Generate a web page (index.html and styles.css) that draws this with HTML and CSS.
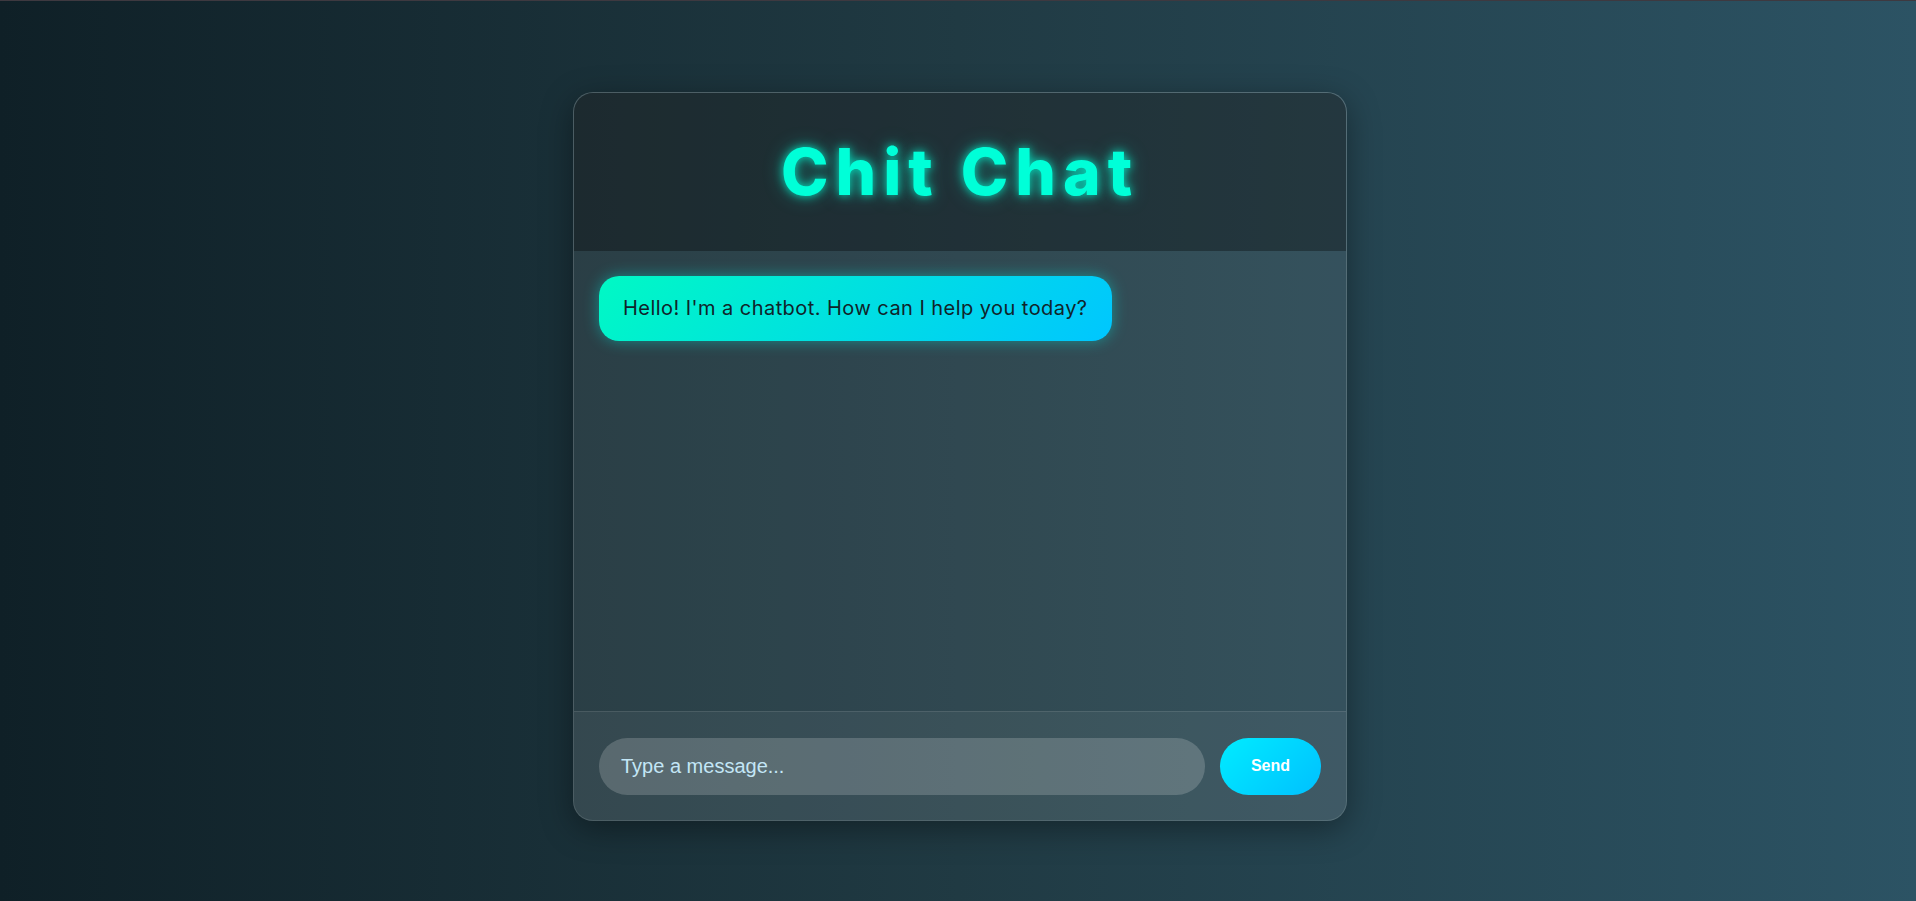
FILE: index.html
```html
<!DOCTYPE html>
<html lang="en">
<head>
<meta charset="utf-8">
<title>Chit Chat</title>
<link rel="stylesheet" href="styles.css">
</head>
<body>
  <div class="chat-card">
    <header class="chat-header">
      <h1 class="chat-title">Chit Chat</h1>
    </header>
    <main class="chat-messages">
      <div class="bubble bot">Hello! I'm a chatbot. How can I help you today?</div>
    </main>
    <footer class="chat-input">
      <input class="message-field" type="text" placeholder="Type a message...">
      <button class="send-btn" type="button">Send</button>
    </footer>
  </div>
</body>
</html>
```

FILE: styles.css
```css
* { box-sizing: border-box; }

html, body { height: 100%; }

body {
  margin: 0;
  border-top: 1px solid #3e3940;
  background: linear-gradient(to right, #0f2027, #203a43, #2c5364);
  display: flex;
  flex-direction: column;
  align-items: center;
  padding: 91px 0 0 4px;
  font-family: Inter, "Liberation Sans", sans-serif;
  overflow: hidden;
}

.chat-card {
  width: 774px;
  height: 729px;
  display: flex;
  flex-direction: column;
  border: 1px solid rgba(255, 255, 255, 0.16);
  border-radius: 20px;
  background: rgba(255, 255, 255, 0.075);
  box-shadow: 0 8px 32px rgba(0, 0, 0, 0.37);
  overflow: hidden;
}

.chat-header {
  height: 158px;
  flex: none;
  display: flex;
  align-items: center;
  justify-content: center;
  background: rgba(0, 0, 0, 0.32);
}

.chat-title {
  margin: 0;
  font-family: Inter, "Liberation Sans", sans-serif;
  font-weight: 800;
  font-size: 64px;
  letter-spacing: 7px;
  line-height: 1;
  color: #00ffd8;
  text-shadow: 0 0 10px rgba(0, 255, 216, 0.8), 0 0 20px rgba(0, 255, 216, 0.35);
}

.chat-messages {
  flex: 1;
  padding: 25px;
  display: flex;
  flex-direction: column;
  align-items: flex-start;
}

.bubble {
  padding: 18px 24px;
  border-radius: 20px;
  font-size: 20px;
  line-height: 29px;
  letter-spacing: 0.45px;
  color: #10242a;
}

.bubble.bot {
  background: linear-gradient(135deg, #00f9c4, #00c6ff);
  box-shadow: 0 0 15px rgba(0, 230, 220, 0.45);
}

.chat-input {
  flex: none;
  height: 109px;
  display: flex;
  align-items: center;
  gap: 15px;
  padding: 25px;
  border-top: 1px solid rgba(255, 255, 255, 0.1);
  background: rgba(255, 255, 255, 0.05);
}

.message-field {
  flex: 1;
  height: 57px;
  border: none;
  outline: none;
  border-radius: 29px;
  padding: 0 22px;
  background: rgba(255, 255, 255, 0.18);
  font-family: "Liberation Sans", Arial, sans-serif;
  font-size: 20px;
  color: #d8f2ff;
}

.message-field::placeholder {
  color: #c3e6f6;
  opacity: 1;
}

.send-btn {
  height: 57px;
  width: 101px;
  border: none;
  border-radius: 29px;
  background: linear-gradient(135deg, #00ecff, #00c0ff);
  font-family: "Liberation Sans", Arial, sans-serif;
  font-weight: 700;
  font-size: 16px;
  color: #ffffff;
  cursor: pointer;
}
```
